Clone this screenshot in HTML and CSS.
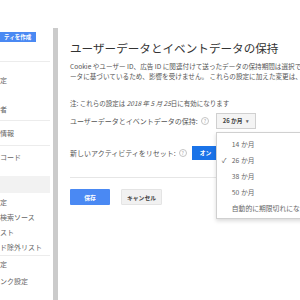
FILE: index.html
```html
<!DOCTYPE html>
<html lang="ja">
<head>
    <meta charset="UTF-8">
    <meta name="viewport" content="width=device-width, initial-scale=1.0">
    <title>データ保持</title>
    <link rel="stylesheet" href="styles.css">
</head>
<body>
    <div class="page">
        <!-- left admin menu, cut off by the window -->
        <aside class="sidebar">
            <div class="create-btn">ティを作成</div>
            <div class="nav-group">
                <div class="nav-item first">定</div>
                <div class="nav-item line">者</div>
                <div class="nav-item line tall">情報</div>
                <div class="nav-item">コード</div>
            </div>
            <div class="nav-active"></div>
            <div class="nav-group plain">
                <div class="nav-item small">定</div>
                <div class="nav-item small">検索ソース</div>
                <div class="nav-item small">スト</div>
                <div class="nav-item small line">ド除外リスト</div>
                <div class="nav-item mid">定</div>
                <div class="nav-item mid">ンク設定</div>
            </div>
        </aside>

        <main class="main">
            <h1>ユーザーデータとイベントデータの保持</h1>
            <p class="desc">
                <span>Cookie やユーザー ID、広告 ID に関連付けて送ったデータの保持期間は選択できます。集計データ</span>
                <span>ータに基づいているため、影響を受けません。 これらの設定に加えた変更は、約 24 時間後に</span>
            </p>
            <p class="note">注: これらの設定は <i>2018 年 5 月 25</i>日に有効になります</p>

            <div class="row">
                <span class="label">ユーザーデータとイベントデータの保持:</span>
                <span class="help">?</span>
                <div class="select">
                    <div class="select-btn">26 か月 <span class="caret">▾</span></div>
                    <ul class="menu">
                        <li>14 か月</li>
                        <li class="checked">26 か月</li>
                        <li>38 か月</li>
                        <li>50 か月</li>
                        <li>自動的に期限切れにならない</li>
                    </ul>
                </div>
            </div>

            <div class="row second">
                <span class="label">新しいアクティビティをリセット:</span>
                <span class="help">?</span>
                <div class="toggle">オン</div>
            </div>

            <hr>

            <div class="actions">
                <button class="btn save">保存</button>
                <button class="btn cancel">キャンセル</button>
            </div>
        </main>
    </div>
</body>
</html>
```

FILE: styles.css
```css
body {
    margin: 0;
    padding: 0;
    background-color: white;
    font-family: "Noto Sans CJK JP", "Noto Sans", sans-serif;
    color: #555;
    overflow: hidden;
}

.page {
    display: flex;
    width: 300px;
    height: 300px;
    overflow: hidden;
}

.sidebar {
    width: 50px;
    flex-shrink: 0;
    margin-right: 3px;
    padding-top: 32px;
    font-size: 7px;
    color: #666;
}

.create-btn {
    width: 32px;
    height: 10px;
    padding-left: 4px;
    background-color: #4a89f3;
    color: white;
    font-size: 5.5px;
    font-weight: bold;
    line-height: 10px;
    white-space: nowrap;
    overflow: hidden;
}

.nav-group {
    margin-top: 19px;
    border-top: 1px solid #ececec;
}

.nav-group.plain {
    margin-top: 2px;
    border-top: none;
}

.nav-item {
    height: 22px;
    line-height: 22px;
    white-space: nowrap;
}

.nav-item.first {
    height: 36px;
    line-height: 36px;
}

.nav-item.line {
    border-bottom: 1px solid #ececec;
}

.nav-item.tall {
    height: 24px;
    line-height: 24px;
}

.nav-item.small {
    height: 15px;
    line-height: 15px;
}

.nav-item.mid {
    height: 17px;
    line-height: 17px;
}

.nav-active {
    height: 17px;
    margin-top: 8px;
    background-color: #f2f2f2;
}

.main {
    flex: 1;
    min-width: 0;
    margin-top: 28px;
    border-left: 5px solid #cbcbcb;
    padding-left: 12px;
    white-space: nowrap;
}

h1 {
    margin: 12px 0 0;
    font-size: 11.6px;
    font-weight: normal;
    line-height: 16px;
    color: #333;
}

.desc {
    margin: 5px 0 0;
    font-size: 6.6px;
    line-height: 10px;
    color: #555;
}

.desc span {
    display: block;
}

.note {
    margin: 17px 0 0;
    font-size: 6.5px;
    line-height: 10px;
}

.row {
    display: flex;
    align-items: center;
    height: 16px;
    margin-top: 5px;
    font-size: 7px;
}

.row.second {
    height: 14px;
    margin-top: 17px;
}

.help {
    width: 6px;
    height: 6px;
    margin-left: 3px;
    border: 1px solid #c4c4c4;
    border-radius: 50%;
    color: #aaa;
    font-size: 5px;
    line-height: 6px;
    text-align: center;
}

.select {
    position: relative;
    margin-left: 7px;
}

.select-btn {
    width: 38px;
    height: 14px;
    border: 1px solid #d0d0d0;
    background-color: #f4f4f4;
    color: #444;
    font-size: 5.8px;
    font-weight: bold;
    line-height: 14px;
    text-align: center;
}

.caret {
    margin-left: 2px;
    font-size: 5px;
    color: #666;
}

.menu {
    position: absolute;
    top: 19px;
    left: 0;
    width: 110px;
    margin: 0;
    padding: 3px 0 2px;
    list-style: none;
    background-color: white;
    border: 1px solid #d0d0d0;
    box-shadow: 0 2px 4px rgba(0, 0, 0, 0.15);
    z-index: 2;
}

.menu li {
    position: relative;
    height: 16px;
    padding-left: 15px;
    font-size: 6.8px;
    line-height: 16px;
    color: #666;
}

.menu li.checked::before {
    content: "✓";
    position: absolute;
    left: 5px;
    color: #555;
}

.toggle {
    width: 36px;
    height: 14px;
    margin-left: 5px;
    padding-left: 8px;
    background-color: #1a73e8;
    color: white;
    font-size: 5.8px;
    font-weight: bold;
    line-height: 14px;
}

hr {
    width: 300px;
    margin: 17px 0 0;
    border: none;
    border-top: 1px solid #e6e6e6;
}

.actions {
    display: flex;
    gap: 11px;
    margin-top: 11px;
}

.btn {
    height: 16px;
    padding: 0;
    border: none;
    border-radius: 1px;
    font-family: "Noto Sans CJK JP", "Noto Sans", sans-serif;
    font-size: 5.8px;
    font-weight: bold;
    cursor: pointer;
}

.save {
    width: 40px;
    background-color: #4a89f3;
    color: white;
}

.cancel {
    width: 41px;
    background-color: #f1f1f1;
    border: 1px solid #e4e4e4;
    color: #444;
}
```
